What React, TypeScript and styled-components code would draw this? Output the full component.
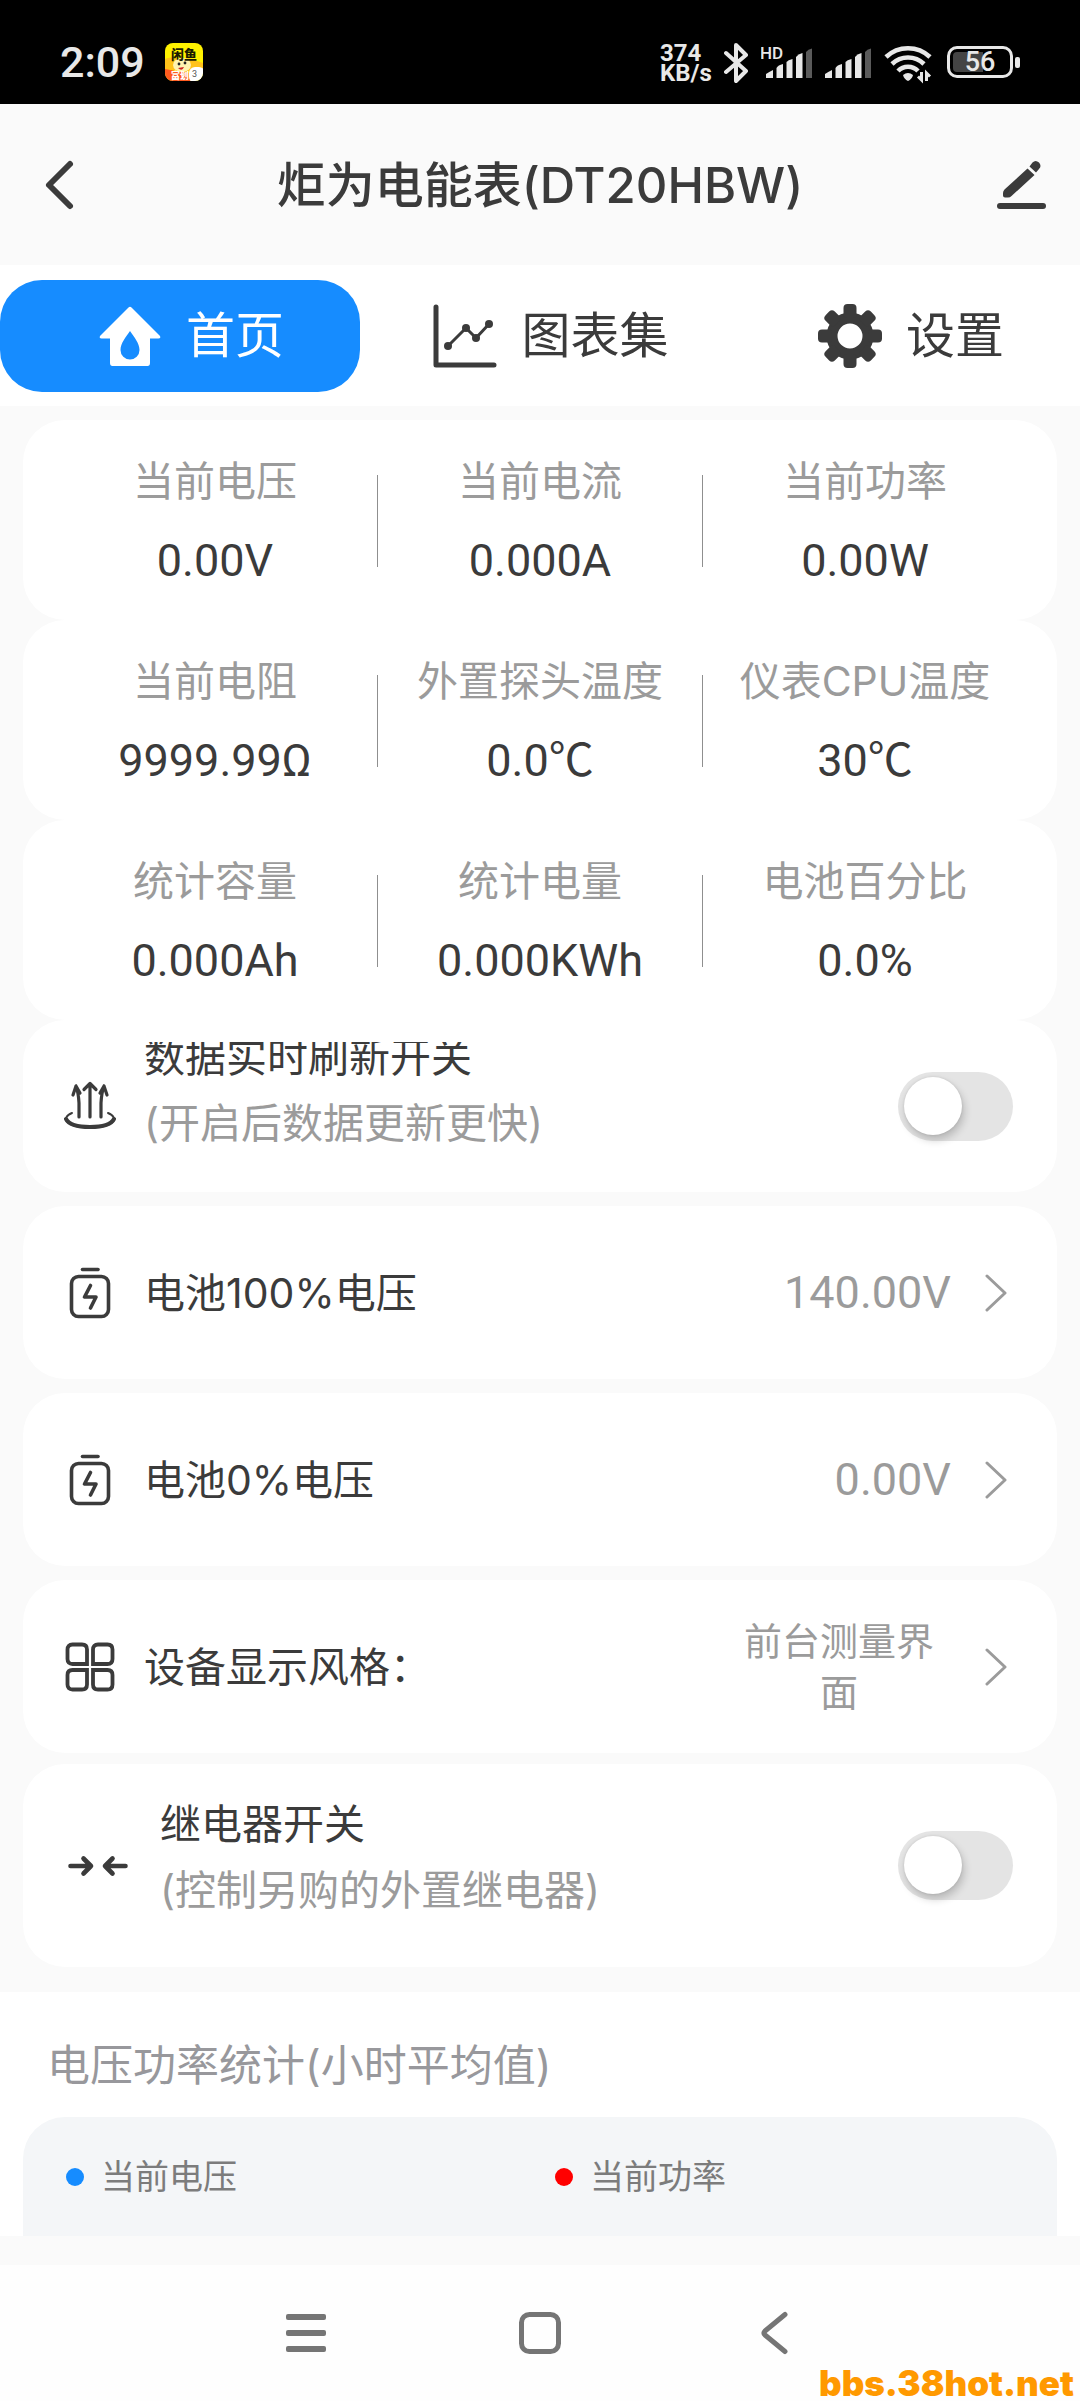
import React, { useId, useState } from 'react';
import styled, { createGlobalStyle } from 'styled-components';

const ink = '#3b3b3b';
const muted = '#9b9b9b';
const blue = '#168cff';
const page = '#fafafa';

const textFont = "Inter, 'Noto Sans CJK SC', sans-serif";
const numberFont = "Roboto, 'Noto Sans CJK SC', sans-serif";

const GlobalStyle = createGlobalStyle`
  *, *::before, *::after { box-sizing: border-box; }
  body {
    margin: 0;
    background: ${page};
    color: ${ink};
    font-family: ${textFont};
  }
  button {
    margin: 0;
    padding: 0;
    border: 0;
    background: none;
    color: inherit;
    font: inherit;
    cursor: pointer;
  }
  h1, h2, p, dl, dt, dd { margin: 0; font-weight: 400; }
  svg { display: block; flex: none; }
`;

const Screen = styled.div`
  position: relative;
  display: flex;
  flex-direction: column;
  min-height: 100vh;
`;

/* ---------- status bar ---------- */

const StatusBar = styled.div`
  display: flex;
  align-items: center;
  justify-content: space-between;
  height: 104px;
  padding: 20px 60px 0;
  background: #000;
  color: #e8e8e8;
  font-family: ${numberFont};
`;

const StatusGroup = styled.div<{ $gap: number }>`
  display: flex;
  align-items: center;
  gap: ${(p) => p.$gap}px;
`;

const Clock = styled.span`
  font-size: 43px;
  line-height: 44px;
  font-weight: 500;
`;

const Speed = styled.span`
  display: flex;
  flex-direction: column;
  width: 51px;
  padding-top: 2px;
  font-size: 24px;
  line-height: 20px;
  font-weight: 700;
`;

const Battery = styled.span`
  display: flex;
  align-items: center;
  gap: 2px;
`;

const BatteryBody = styled.span`
  display: grid;
  width: 66px;
  height: 32px;
  padding: 3px;
  border: 3px solid #e8e8e8;
  border-radius: 10px;
`;

const BatteryLevel = styled.span`
  border-radius: 4px;
  background: linear-gradient(to right, #444 56%, transparent 56%);
  font-size: 27px;
  line-height: 20px;
  font-weight: 500;
  text-align: center;
`;

const BatteryTip = styled.span`
  width: 5px;
  height: 11px;
  border-radius: 2px;
  background: #e8e8e8;
`;

/* ---------- header and tabs ---------- */

const Header = styled.header`
  display: grid;
  grid-template-columns: 60px 1fr 60px;
  align-items: center;
  height: 161px;
  padding: 0 28px;
`;

const IconButton = styled.button`
  display: grid;
  place-items: center;
  height: 60px;
`;

const Title = styled.h1`
  padding-top: 2px;
  font-size: 49px;
  line-height: 66px;
  font-weight: 500;
  text-align: center;
`;

const Tabs = styled.nav`
  display: grid;
  grid-template-columns: repeat(3, 1fr);
  padding: 15px 0 14px;
  background: #fff;
`;

const Tab = styled.button<{ $active: boolean }>`
  display: flex;
  align-items: center;
  justify-content: center;
  gap: 24px;
  height: 112px;
  padding-left: 22px;
  border-radius: 42px;
  background: ${(p) => (p.$active ? blue : 'transparent')};
  color: ${(p) => (p.$active ? '#fff' : ink)};
  font-size: 49px;
  line-height: 66px;
`;

/* ---------- cards ---------- */

const Stats = styled.section`
  padding: 14px 23px 0;
`;

const Card = styled.div`
  border-radius: 42px;
  background: #fff;
`;

const StatRow = styled(Card)`
  display: flex;
  align-items: center;
  padding: 31px 30px 29px;
`;

const Stat = styled.dl`
  display: flex;
  flex: 1;
  flex-direction: column;
  gap: 20px;
  min-width: 0;
  text-align: center;
  white-space: nowrap;
`;

const StatLabel = styled.dt`
  color: ${muted};
  font-size: 41px;
  line-height: 60px;
`;

const StatValue = styled.dd`
  font-family: ${numberFont};
  font-size: 45px;
  line-height: 60px;
`;

const StatDivider = styled.span`
  width: 1px;
  height: 92px;
  background: #8f8f8f;
`;

const Rows = styled.section<{ $top: number; $bottom: number }>`
  display: flex;
  flex-direction: column;
  gap: 14px;
  padding: ${(p) => p.$top}px 23px ${(p) => p.$bottom}px;
`;

const SwitchCard = styled(Card)`
  display: flex;
  align-items: center;
  gap: 28px;
  padding: 22px 44px 22px 41px;
`;

const LinkCard = styled(Card).attrs({ as: 'button' })`
  display: flex;
  align-items: center;
  gap: 28px;
  min-height: 173px;
  padding: 22px 44px 22px 41px;
  text-align: left;
  border-radius: 42px;
  background: #fff;
`;

const IconSlot = styled.span<{ $wide?: boolean }>`
  display: grid;
  place-items: center;
  flex: none;
  width: ${(p) => (p.$wide ? 68 : 52)}px;
`;

const RowTitle = styled.span`
  flex: 1;
  font-size: 41px;
  line-height: 60px;
`;

const SwitchText = styled.label<{ $height: number; $bottom: number }>`
  display: flex;
  flex: 1;
  flex-direction: column;
  justify-content: flex-end;
  height: ${(p) => p.$height}px;
  padding-bottom: ${(p) => p.$bottom}px;
  overflow: hidden;
  font-size: 41px;
  line-height: 66px;
`;

const Hint = styled.span`
  color: ${muted};
`;

const RowValue = styled.span<{ $numeric?: boolean }>`
  max-width: 224px;
  margin-right: 6px;
  color: ${muted};
  font-family: ${(p) => (p.$numeric ? numberFont : textFont)};
  font-size: ${(p) => (p.$numeric ? 45 : 38)}px;
  line-height: 51px;
  text-align: center;
`;

const Switch = styled.input.attrs({ type: 'checkbox', role: 'switch' })`
  appearance: none;
  flex: none;
  width: 115px;
  height: 69px;
  margin: 0;
  padding: 5px 6px;
  border-radius: 35px;
  background: #e4e4e4;
  cursor: pointer;

  &::before {
    content: '';
    display: block;
    width: 58px;
    height: 58px;
    border-radius: 50%;
    background: #fff;
    box-shadow: 2px 5px 9px rgba(0, 0, 0, 0.2), 0 0 3px rgba(0, 0, 0, 0.1);
  }
  &:checked {
    background: ${blue};
  }
  &:checked::before {
    margin-left: auto;
  }
`;

/* ---------- statistics ---------- */

const Statistics = styled.section`
  display: flex;
  flex-direction: column;
  gap: 19px;
  padding: 40px 23px 0;
  background: #fff;
`;

const StatisticsTitle = styled.h2`
  padding-left: 24px;
  color: #98989c;
  font-size: 43px;
  line-height: 66px;
`;

const Legend = styled.div`
  display: grid;
  grid-template-columns: 1fr 1fr;
  align-items: center;
  height: 119px;
  padding: 0 13px 0 43px;
  border-radius: 42px 42px 0 0;
  background: #f4f6f8;
`;

const LegendItem = styled.span`
  display: flex;
  align-items: center;
  gap: 17px;
  color: #7c7c7c;
  font-size: 34px;
  line-height: 51px;
`;

const Dot = styled.span<{ $color: string }>`
  width: 18px;
  height: 18px;
  border-radius: 50%;
  background: ${(p) => p.$color};
`;

/* ---------- system navigation ---------- */

const SystemNav = styled.nav`
  display: flex;
  align-items: center;
  justify-content: center;
  gap: 190px;
  height: 136px;
  margin-top: 29px;
  background: #fefefe;
  color: #757575;
`;

const SystemButton = styled.button`
  display: grid;
  place-items: center;
  width: 44px;
  height: 60px;
`;

const Watermark = styled.span`
  position: absolute;
  right: 6px;
  bottom: 0;
  color: #ff9900;
  font-size: 35px;
  line-height: 35px;
  font-weight: 900;
`;

/* ---------- drawings ---------- */

const AppBadge = () => (
  <svg width="38" height="38" viewBox="0 0 38 38" aria-hidden="true">
    <defs>
      <clipPath id="badge"><rect width="38" height="38" rx="8" /></clipPath>
    </defs>
    <g clipPath="url(#badge)">
      <rect width="38" height="38" fill="#fff200" />
      <path d="M0 25 L14 29 L26 25 V38 H0Z" fill="#ff5a1f" />
      <path d="M0 16 Q8 12 14 18 L24 15 L38 20 V28 L24 30 L0 26Z" fill="#ffc21a" />
      <ellipse cx="17" cy="22" rx="9" ry="7" fill="#fff3b0" />
      <circle cx="14" cy="21" r="1.4" fill="#222" />
      <circle cx="20" cy="20" r="1.4" fill="#222" />
      <path d="M13 25 Q17 29 19 24Z" fill="#c22" />
      <rect x="24" y="24" width="16" height="16" rx="6" fill="#fff" />
      <text x="6" y="16" fontSize="13" fontWeight="900" fill="#1b1b00" fontFamily="Noto Sans CJK SC, sans-serif">闲鱼</text>
      <text x="6" y="36" fontSize="9" fontWeight="900" fill="#fff" fontFamily="Noto Sans CJK SC, sans-serif">富划</text>
      <text x="27" y="34" fontSize="9" fill="#555" fontFamily="Roboto, sans-serif">3</text>
    </g>
  </svg>
);

const Bluetooth = () => (
  <svg width="24" height="44" viewBox="0 0 24 44" fill="none" stroke="#e8e8e8" strokeWidth="4" strokeLinejoin="round" strokeLinecap="round" aria-hidden="true">
    <path d="M2 13 L22 31 L12 41 V5 L22 15 L2 32" />
  </svg>
);

const bars = [
  'M0 38 V34 Q3 32 7 30 V38Z',
  'M10.500 38 V28 Q12 25 17 24 V38Z',
  'M20.500 38 V22 Q22 20 26.500 19 V38Z',
  'M30 38 V17 Q32 14 36.500 13 V38Z',
];

const Signal = ({ hd = false }: { hd?: boolean }) => {
  const shift = hd ? 5 : 0;
  return (
    <svg width={46 + shift} height="44" viewBox={`0 0 ${46 + shift} 44`} aria-hidden="true">
      {hd && (
        <text x="-1" y="19" fontSize="17" fontWeight="500" fill="#e8e8e8" fontFamily="Roboto, sans-serif">HD</text>
      )}
      <g transform={`translate(${shift} 0)`} strokeLinejoin="round">
        {bars.map((d) => <path key={d} d={d} fill="#e8e8e8" />)}
        <path d="M40 38 V12 Q42 9 46 8.500 V38Z" fill="#5a5a5a" />
      </g>
    </svg>
  );
};

const Wifi = () => (
  <svg width="50" height="44" viewBox="0 0 50 44" fill="none" stroke="#e8e8e8" strokeWidth="4.600" aria-hidden="true">
    <path d="M2 17 A32 32 0 0 1 46 17" />
    <path d="M8 24 A23 23 0 0 1 40 24" />
    <path d="M14 31 A14 14 0 0 1 34 31" />
    <path d="M19 35 Q24 31 29 35 Q28 39 24 41 Q20 39 19 35Z" fill="#e8e8e8" stroke="none" />
    <path d="M37.500 32 V40 L34 36.500 M42.500 41 V33 L46 36.500" strokeWidth="3" />
  </svg>
);

const BackIcon = () => (
  <svg width="52" height="52" viewBox="0 0 52 52" fill="none" stroke="currentColor" strokeWidth="6" strokeLinecap="round" strokeLinejoin="round" aria-hidden="true">
    <path d="M38 5 L17 26 L38 47" />
  </svg>
);

const EditIcon = () => (
  <svg width="52" height="52" viewBox="0 0 52 52" fill="currentColor" aria-hidden="true">
    <rect x="1" y="44" width="49" height="6" rx="3" />
    <path d="M31.500 9.500 L38.500 16 L15.500 37 Q14 38.500 12 38.500 H9 Q7 38.500 7 36.500 V34 Q7 32 8.500 30.500Z" />
    <path d="M33.500 7.500 L36.500 3.500 Q39.500 0.500 43 3.500 Q46 7 43 10 L40 13.500Z" />
  </svg>
);

const HomeIcon = () => (
  <svg width="64" height="64" viewBox="0 0 64 64" aria-hidden="true">
    <path fillRule="evenodd" fill="currentColor" d="M30.500 3.500 Q32 2.200 33.500 3.500 L62 32 Q63 34.500 60.500 34.500 H52 V59 Q52 62 49.500 62 H14.500 Q12 62 12 59 V34.500 H3.500 Q1 34.500 2 32Z M32 27 C28 33 22.500 39 22.500 46 A9.500 9.500 0 0 0 41.500 46 C41.500 39 36 33 32 27Z" />
  </svg>
);

const ChartIcon = () => (
  <svg width="64" height="64" viewBox="0 0 64 64" fill="none" stroke="currentColor" strokeLinecap="round" strokeLinejoin="round" aria-hidden="true">
    <path d="M3 3 V61 H61" strokeWidth="5" />
    <path d="M15 42 L33 24 L43 34 L56 20" strokeWidth="3" />
    <g fill="currentColor" stroke="none">
      <circle cx="15" cy="42" r="4" />
      <circle cx="33" cy="24" r="4" />
      <circle cx="43" cy="34" r="4" />
      <circle cx="56" cy="20" r="4" />
    </g>
  </svg>
);

const GearIcon = () => (
  <svg width="64" height="64" viewBox="0 0 64 64" aria-hidden="true">
    <circle cx="32" cy="32" r="18" fill="none" stroke="currentColor" strokeWidth="11" />
    {[0, 45, 90, 135, 180, 225, 270, 315].map((a) => (
      <rect key={a} x="25.500" y="0" width="13" height="14" rx="4" fill="currentColor" transform={`rotate(${a} 32 32)`} />
    ))}
  </svg>
);

const RefreshIcon = () => (
  <svg width="52" height="50" viewBox="0 0 52 50" fill="none" stroke="currentColor" strokeWidth="3.200" strokeLinecap="round" strokeLinejoin="round" aria-hidden="true">
    <path d="M26 36 V3 M20 8.500 L26 2.500 L32 8.500" />
    <path d="M15 36 V22 Q14.500 12 12 5 L9 14 M12 5 L16 12" />
    <path d="M37 36 V22 Q37.500 12 40 5 L43 14 M40 5 L36 12" />
    <path d="M8 32 C-4 37 2 46.500 26 46.500 C50 46.500 56 37 44 32" strokeWidth="2" />
    <path d="M2 38 C5 44 14 46 26 46 C38 46 47 44 50 38" strokeWidth="4" />
  </svg>
);

const BatteryIcon = () => (
  <svg width="42" height="52" viewBox="0 0 42 52" fill="none" stroke="currentColor" strokeWidth="3.600" strokeLinecap="round" strokeLinejoin="round" aria-hidden="true">
    <path d="M13.500 2.500 H29" />
    <rect x="2.500" y="9.500" width="37" height="40" rx="7" />
    <path d="M21.500 18.500 L15.500 30 H27 L21.500 41" />
  </svg>
);

const GridIcon = () => (
  <svg width="50" height="50" viewBox="0 0 50 50" fill="none" stroke="currentColor" strokeWidth="3.800" aria-hidden="true">
    <path d="M7.500 2.500 H17 Q22 2.500 22 7.500 V22 H7.500 Q2.500 22 2.500 17 V7.500 Q2.500 2.500 7.500 2.500Z" />
    <path d="M33 2.500 H42.500 Q47.500 2.500 47.500 7.500 V17 Q47.500 22 42.500 22 H28 V7.500 Q28 2.500 33 2.500Z" />
    <path d="M7.500 28 H22 V42.500 Q22 47.500 17 47.500 H7.500 Q2.500 47.500 2.500 42.500 V33 Q2.500 28 7.500 28Z" />
    <path d="M28 28 H42.500 Q47.500 28 47.500 33 V42.500 Q47.500 47.500 42.500 47.500 H33 Q28 47.500 28 42.500Z" />
  </svg>
);

const RelayIcon = () => (
  <svg width="60" height="22" viewBox="0 0 60 22" fill="none" stroke="currentColor" strokeWidth="4.600" strokeLinecap="round" strokeLinejoin="round" aria-hidden="true">
    <path d="M2.500 11 H23 M15.500 3.500 L23 11 L15.500 18.500" />
    <path d="M57.500 11 H37 M44.500 3.500 L37 11 L44.500 18.500" />
  </svg>
);

const ChevronIcon = () => (
  <svg width="28" height="40" viewBox="0 0 28 40" fill="none" stroke="#9b9b9b" strokeWidth="3" strokeLinecap="round" strokeLinejoin="round" aria-hidden="true">
    <path d="M2 3 L20 20 L2 37" />
  </svg>
);

/* ---------- composition ---------- */

const stats = [
  [['当前电压', '0.00V'], ['当前电流', '0.000A'], ['当前功率', '0.00W']],
  [['当前电阻', '9999.99Ω'], ['外置探头温度', '0.0℃'], ['仪表CPU温度', '30℃']],
  [['统计容量', '0.000Ah'], ['统计电量', '0.000KWh'], ['电池百分比', '0.0%']],
];

const tabs = [
  { name: '首页', icon: <HomeIcon /> },
  { name: '图表集', icon: <ChartIcon /> },
  { name: '设置', icon: <GearIcon /> },
];

const links = [
  { name: '电池100%电压', value: '140.00V', numeric: true, icon: <BatteryIcon /> },
  { name: '电池0%电压', value: '0.00V', numeric: true, icon: <BatteryIcon /> },
  { name: '设备显示风格：', value: '前台测量界面', numeric: false, icon: <GridIcon /> },
];

type SwitchRowProps = {
  icon: React.ReactNode;
  title: string;
  hint: string;
  height: number;
  bottom: number;
  wide?: boolean;
};

const SwitchRow = ({ icon, title, hint, height, bottom, wide }: SwitchRowProps) => {
  const id = useId();
  return (
    <SwitchCard>
      <IconSlot $wide={wide}>{icon}</IconSlot>
      <SwitchText htmlFor={id} $height={height} $bottom={bottom}>
        <span>{title}</span>
        <Hint>{hint}</Hint>
      </SwitchText>
      <Switch id={id} />
    </SwitchCard>
  );
};

export default function App() {
  const [active, setActive] = useState(0);

  return (
    <Screen>
      <GlobalStyle />
      <StatusBar>
        <StatusGroup $gap={20}>
          <Clock>2:09</Clock>
          <AppBadge />
        </StatusGroup>
        <StatusGroup $gap={13}>
          <Speed>
            <span>374</span>
            <span>KB/s</span>
          </Speed>
          <Bluetooth />
          <Signal hd />
          <Signal />
          <Wifi />
          <Battery>
            <BatteryBody>
              <BatteryLevel>56</BatteryLevel>
            </BatteryBody>
            <BatteryTip />
          </Battery>
        </StatusGroup>
      </StatusBar>

      <Header>
        <IconButton aria-label="返回"><BackIcon /></IconButton>
        <Title>炬为电能表(DT20HBW)</Title>
        <IconButton aria-label="编辑"><EditIcon /></IconButton>
      </Header>

      <Tabs>
        {tabs.map((tab, i) => (
          <Tab key={tab.name} $active={i === active} onClick={() => setActive(i)}>
            {tab.icon}
            {tab.name}
          </Tab>
        ))}
      </Tabs>

      <Stats>
        {stats.map((row) => (
          <StatRow key={row[0][0]}>
            {row.map(([label, value], i) => (
              <React.Fragment key={label}>
                {i > 0 && <StatDivider />}
                <Stat>
                  <StatLabel>{label}</StatLabel>
                  <StatValue>{value}</StatValue>
                </Stat>
              </React.Fragment>
            ))}
          </StatRow>
        ))}
      </Stats>

      <Rows $top={0} $bottom={11}>
        <SwitchRow icon={<RefreshIcon />} title="数据实时刷新开关" hint="(开启后数据更新更快)" height={128} bottom={14} />
        {links.map((link) => (
          <LinkCard key={link.name}>
            <IconSlot>{link.icon}</IconSlot>
            <RowTitle>{link.name}</RowTitle>
            <RowValue $numeric={link.numeric}>{link.value}</RowValue>
            <ChevronIcon />
          </LinkCard>
        ))}
      </Rows>
      <Rows $top={0} $bottom={25}>
        <SwitchRow icon={<RelayIcon />} title="继电器开关" hint="(控制另购的外置继电器)" height={159} bottom={22} wide />
      </Rows>

      <Statistics>
        <StatisticsTitle>电压功率统计(小时平均值)</StatisticsTitle>
        <Legend>
          <LegendItem><Dot $color={blue} />当前电压</LegendItem>
          <LegendItem><Dot $color="#ff0000" />当前功率</LegendItem>
        </Legend>
      </Statistics>

      <SystemNav>
        <SystemButton aria-label="最近任务">
          <svg width="40" height="40" viewBox="0 0 40 40" fill="currentColor" aria-hidden="true">
            <rect y="1" width="40" height="6" rx="2" />
            <rect y="17" width="40" height="6" rx="2" />
            <rect y="33" width="40" height="6" rx="2" />
          </svg>
        </SystemButton>
        <SystemButton aria-label="主页">
          <svg width="44" height="44" viewBox="0 0 44 44" fill="none" stroke="currentColor" strokeWidth="5" aria-hidden="true">
            <rect x="3.500" y="3.500" width="37" height="37" rx="8" />
          </svg>
        </SystemButton>
        <SystemButton aria-label="返回上一页">
          <svg width="44" height="44" viewBox="0 0 44 44" fill="none" stroke="currentColor" strokeWidth="5" strokeLinecap="round" strokeLinejoin="round" aria-hidden="true">
            <path d="M33 3.500 L13 20 Q11 22 13 24 L33 40.500" />
          </svg>
        </SystemButton>
      </SystemNav>
      <Watermark>bbs.38hot.net</Watermark>
    </Screen>
  );
}
